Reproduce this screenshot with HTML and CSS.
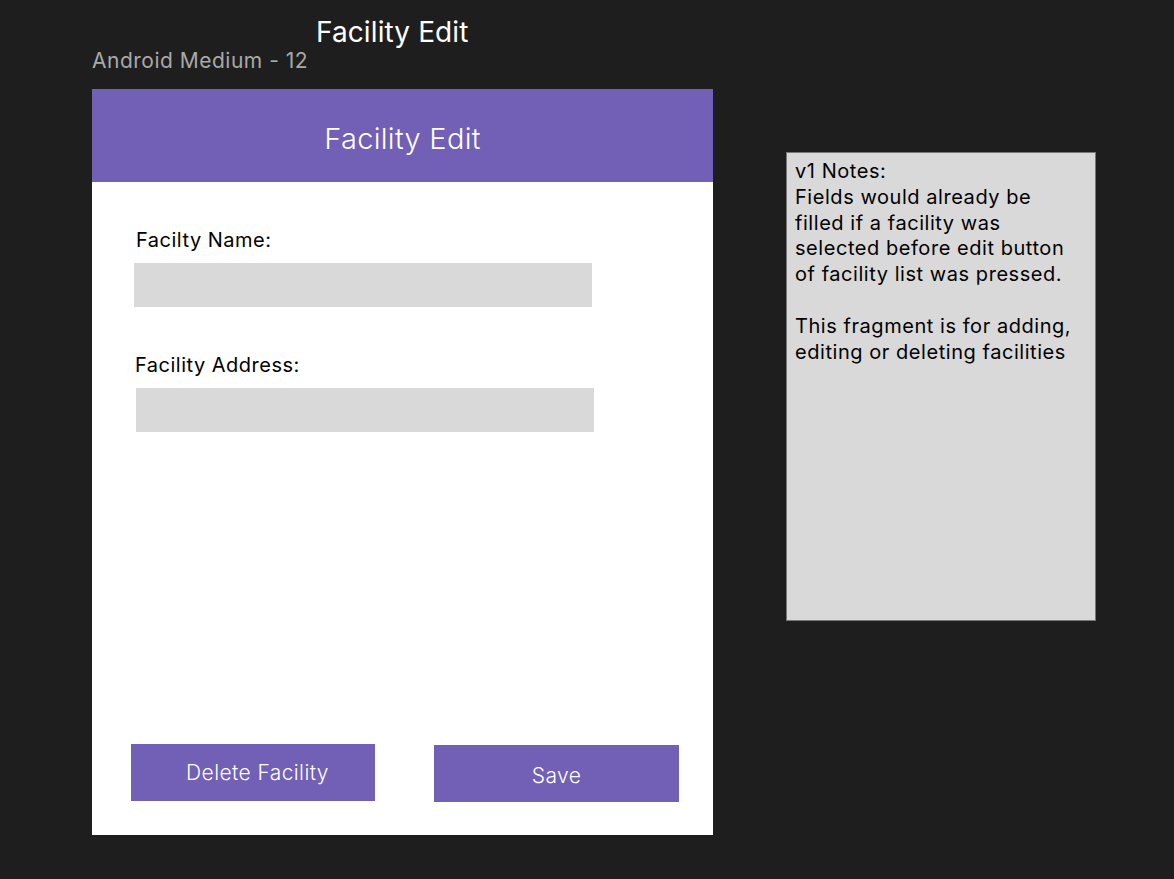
FILE: index.html
```html
<!DOCTYPE html>
<html lang="en">
<head>
<meta charset="utf-8">
<title>Facility Edit</title>
<link rel="stylesheet" href="styles.css">
</head>
<body>
<div class="canvas">
  <div class="canvas-title">Facility Edit</div>
  <div class="frame-group">
    <div class="frame-label">Android Medium - 12</div>
    <div class="frame">
      <header class="app-bar">Facility Edit</header>
      <main class="form">
        <label class="field-label name-label">Facilty Name:</label>
        <div class="field name-field"></div>
        <label class="field-label address-label">Facility Address:</label>
        <div class="field address-field"></div>
      </main>
      <div class="actions">
        <button class="btn btn-delete">Delete Facility</button>
        <button class="btn btn-save">Save</button>
      </div>
    </div>
  </div>
  <div class="notes">
    <p>v1 Notes:<br>Fields would already be filled if a facility was selected before edit button of facility list was pressed.</p>
    <p>This fragment is for adding, editing or deleting facilities</p>
  </div>
</div>
</body>
</html>
```

FILE: styles.css
```css
html, body {
  margin: 0;
  padding: 0;
  background: #1e1e1e;
  font-family: Inter, "Noto Sans", sans-serif;
}

.canvas {
  position: relative;
  width: 1174px;
  height: 879px;
  overflow: hidden;
}

.canvas-title {
  position: absolute;
  left: 316px;
  top: 15px;
  color: #ffffff;
  font-size: 28px;
  letter-spacing: 0.1px;
  line-height: 34px;
}

.frame-group {
  position: absolute;
  left: 92px;
  top: 47px;
  display: flex;
  flex-direction: column;
}

.frame-label {
  color: #a9a9a9;
  font-size: 21px;
  letter-spacing: 0.5px;
  line-height: 28px;
  height: 42px;
}

.frame {
  width: 621px;
  height: 746px;
  background: #ffffff;
  display: flex;
  flex-direction: column;
}

.app-bar {
  height: 93px;
  box-sizing: border-box;
  padding-top: 6px;
  background: #7160b5;
  color: #ffffff;
  font-size: 29px;
  letter-spacing: 0.3px;
  font-weight: 300;
  display: flex;
  align-items: center;
  justify-content: center;
}

.form {
  flex: 1;
  display: flex;
  flex-direction: column;
  padding-left: 42px;
  padding-top: 46px;
}

.field-label {
  color: #000000;
  font-size: 20px;
  letter-spacing: 0.5px;
  line-height: 24px;
  display: block;
}

.name-label { margin-left: 2px; }
.address-label { margin-left: 1px; margin-top: 46px; }

.field {
  width: 458px;
  height: 44px;
  background: #d9d9d9;
}

.name-field { margin-top: 11px; }
.address-field { margin-top: 11px; margin-left: 2px; }

.actions {
  display: flex;
  align-items: flex-start;
  padding-left: 39px;
  height: 91px;
}

.btn {
  border: 0;
  padding: 0;
  margin: 0;
  background: #7160b5;
  color: #ffffff;
  font-family: Inter, "Noto Sans", sans-serif;
  font-size: 21px;
  letter-spacing: 0.4px;
  font-weight: 300;
  height: 57px;
  cursor: pointer;
}

.btn-delete {
  width: 244px;
  padding-left: 9px;
}

.btn-save {
  width: 245px;
  margin-left: 59px;
  margin-top: 1px;
  padding-top: 4px;
}

.notes {
  position: absolute;
  left: 786px;
  top: 152px;
  width: 310px;
  height: 469px;
  box-sizing: border-box;
  background: #d9d9d9;
  border: 1px solid #777777;
  padding: 6px 20px 6px 8px;
  color: #000000;
  font-size: 20px;
  letter-spacing: 0.55px;
  line-height: 25.8px;
}

.notes p {
  margin: 0 0 25.8px 0;
}
```
